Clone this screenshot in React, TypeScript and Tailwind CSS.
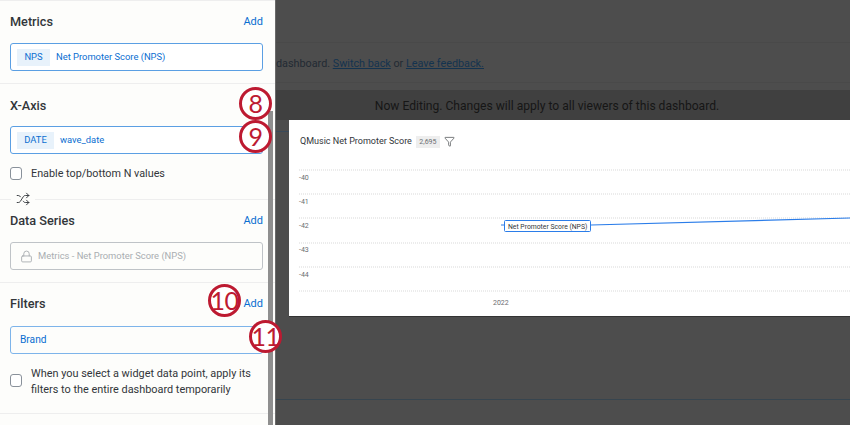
import { Filter, Lock, Shuffle } from "lucide-react";

const gridLines = [170, 194, 218, 243, 267, 291];
const axisLabels = [
  { y: 177, label: "-40" },
  { y: 201, label: "-41" },
  { y: 225, label: "-42" },
  { y: 249, label: "-43" },
  { y: 274, label: "-44" },
];

function SectionTitle({ title, add }: { title: string; add?: boolean }) {
  return (
    <div className="flex h-[22px] items-center justify-between">
      <h3 className="text-[12.7px] font-medium text-[#32363a]">{title}</h3>
      {add && <span className="text-[11px] text-[#0a6ed1]">Add</span>}
    </div>
  );
}

function FieldBox({ tag, text, tagWidth }: { tag: string; text: string; tagWidth: string }) {
  return (
    <div className="flex h-[28px] items-center gap-[6px] rounded-[3px] border border-[#5b9fe3] bg-white pl-[6px] text-[9.4px] text-[#0a6ed1]">
      <span className={`flex h-[17px] items-center justify-center bg-[#e8f2fb] ${tagWidth}`}>{tag}</span>
      <span>{text}</span>
    </div>
  );
}

function Callout({ n, className }: { n: string; className: string }) {
  return (
    <div
      className={`absolute z-20 flex h-[33px] w-[33px] items-center justify-center rounded-full border-[3px] border-[#bd1a31] bg-white font-['Lato',sans-serif] text-[25px] leading-none tracking-[-0.5px] text-[#bd1a31] ${className}`}
    >
      {n}
    </div>
  );
}

export default function App() {
  return (
    <div className="relative flex h-[425px] w-[850px] overflow-hidden bg-[#4d4d4d] font-['Roboto',sans-serif]">
      <aside className="relative z-10 w-[275px] shrink-0 border-t border-[#eeeeee] bg-[#fdfdfb]">
        <section className="h-[83px] border-b border-[#eeeeee] pr-[12px] pl-[10px] pt-[10px]">
          <SectionTitle title="Metrics" add />
          <div className="mt-[10px]">
            <FieldBox tag="NPS" text="Net Promoter Score (NPS)" tagWidth="w-[33px]" />
          </div>
        </section>

        <section className="relative h-[116px] border-b border-[#eeeeee] pr-[12px] pl-[10px] pt-[11px]">
          <SectionTitle title="X-Axis" />
          <div className="mt-[9px]">
            <FieldBox tag="DATE" text="wave_date" tagWidth="w-[37px]" />
          </div>
          <label className="mt-[10px] flex items-center gap-[9px] text-[10.8px] text-[#32363a]">
            <span className="h-[13px] w-[12px] rounded-[3px] border-[1.5px] border-[#89919a] bg-white" />
            <span className="pt-[2px]">Enable top/bottom N values</span>
          </label>
          <div className="absolute -bottom-[10px] left-[11px] flex h-[20px] w-[24px] items-center justify-center bg-[#fdfdfb]">
            <Shuffle size={14} strokeWidth={1.6} className="text-[#32363a]" />
          </div>
        </section>

        <section className="h-[83px] border-b border-[#eeeeee] pr-[12px] pl-[10px] pt-[10px]">
          <SectionTitle title="Data Series" add />
          <div className="mt-[10px] flex h-[28px] items-center gap-[5px] rounded-[3px] border border-[#bfc3c7] pl-[9px] text-[9.4px] text-[#a9adb1]">
            <Lock size={13} strokeWidth={1.7} />
            Metrics - Net Promoter Score (NPS)
          </div>
        </section>

        <section className="h-[131px] border-b border-[#eeeeee] pr-[12px] pl-[10px] pt-[10px]">
          <SectionTitle title="Filters" add />
          <div className="mt-[11px] flex h-[28px] items-center rounded-[3px] border border-[#7db4ea] pl-[9px] text-[10.2px] text-[#0a6ed1]">
            Brand
          </div>
          <label className="mt-[11px] flex items-center gap-[9px] text-[10.9px] leading-[15.5px] text-[#32363a]">
            <span className="mb-[2px] h-[13px] w-[12px] shrink-0 rounded-[3px] border-[1.5px] border-[#89919a] bg-white" />
            <span className="whitespace-nowrap pt-[1px]">
              When you select a widget data point, apply its
              <br />
              filters to the entire dashboard temporarily
            </span>
          </label>
        </section>

        <div className="absolute top-[110px] bottom-0 left-[268px] w-[5px] bg-[#8f8f8f]" />
      </aside>

      <main className="relative min-w-0 flex-1 border-l border-[#6a6a6a]">
        <div className="h-[43px] border-b border-[#494949]" />
        <div className="flex h-[40px] items-center whitespace-nowrap border-b border-[#494949] pt-[3px] text-[10.8px] text-[#222a33]">
          dashboard.&nbsp;
          <span className="text-[#14334f] underline">Switch back</span>
          &nbsp;or&nbsp;
          <span className="text-[#14334f] underline">Leave feedback.</span>
        </div>
        <div className="h-[7px]" />
        <div className="flex h-[30px] items-center justify-center whitespace-nowrap bg-[#404040] pt-[2px] pr-[32px] text-[12.1px] text-[#161616]">
          Now Editing. Changes will apply to all viewers of this dashboard.
        </div>

        <div className="relative ml-[13px] h-[196px] bg-white shadow-[0_1px_0_#333]">
          <div className="flex items-center gap-[4px] pl-[11px] pt-[15px] text-[9px] text-[#32363a]">
            QMusic Net Promoter Score
            <span className="flex h-[12px] w-[24px] items-center justify-center bg-[#eeeeee] text-[7px] text-[#6a6d70]">
              2,695
            </span>
            <Filter size={11} strokeWidth={1.4} />
          </div>
        </div>

        <div className="absolute top-[131px] left-0 h-[1px] w-[13px] bg-[#3a4a5a]" />
        <div className="absolute right-0 bottom-[25px] left-0 h-[1px] bg-[#37454f]" />
      </main>

      <svg className="absolute top-0 left-0 z-[5]" width="850" height="425" fontFamily="Roboto, sans-serif">
        {gridLines.map((y) => (
          <line key={y} x1="299" x2="850" y1={y} y2={y} stroke="#d9d9d9" strokeDasharray="1 1" />
        ))}
        {axisLabels.map((a) => (
          <text key={a.label} x="299" y={a.y + 2.5} fontSize="7" fill="#6a6d70">
            {a.label}
          </text>
        ))}
        <text x="493" y="304.5" fontSize="7" fill="#6a6d70">
          2022
        </text>
        <line x1="501" x2="505" y1="225" y2="225" stroke="#2b7de9" />
        <line x1="591" x2="850" y1="225" y2="218" stroke="#2b7de9" strokeWidth="1.2" />
        <rect x="504.5" y="220.5" width="86" height="11" rx="1" fill="white" stroke="#2b7de9" />
        <text x="508" y="228.5" fontSize="6.8" fill="#32363a">
          Net Promoter Score (NPS)
        </text>
      </svg>

      <Callout n="8" className="top-[87px] left-[239px]" />
      <Callout n="9" className="top-[120px] left-[239px]" />
      <Callout n="10" className="top-[284px] left-[208px]" />
      <Callout n="11" className="top-[320px] left-[249px]" />
    </div>
  );
}
